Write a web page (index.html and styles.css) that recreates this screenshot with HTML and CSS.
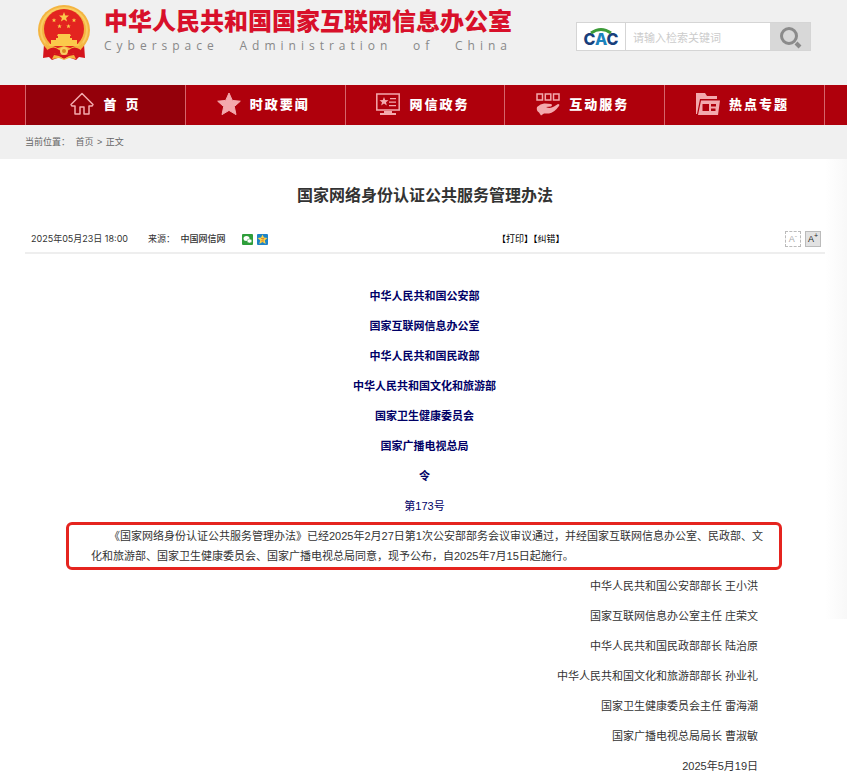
FILE: index.html
```
<!DOCTYPE html>
<html lang="zh-CN">
<head>
	<meta charset="utf-8">
	<meta name="viewport" content="width=device-width, initial-scale=1">
	<title>国家网络身份认证公共服务管理办法</title>
	<link rel="stylesheet" href="styles.css">
</head>
<body>
	<div class="header">
		<div class="logo">
			<svg class="emblem" viewBox="0 0 54 56">
				<path d="M7 39 L6 53 L12 52 L15 55 L23 52 L27 54 L31 52 L39 55 L42 52 L48 53 L47 39z" fill="#d4141c"/>
				<ellipse cx="27" cy="25" rx="26" ry="25" fill="#f4b541"/>
				<ellipse cx="27" cy="25" rx="23" ry="22" fill="none" stroke="#f9cc62" stroke-width="2"/>
				<circle cx="27" cy="24" r="20" fill="#e32420"/>
				<path d="M27 7l1.3 3.4 3.7.2-2.9 2.3 1 3.6-3.1-2-3.1 2 1-3.6-2.9-2.3 3.7-.2z" fill="#fbc94b"/>
				<path d="M17 13l.6 1.5 1.6.1-1.2 1 .4 1.6-1.4-.9-1.4.9.4-1.6-1.2-1 1.6-.1zM37 13l.6 1.5 1.6.1-1.2 1 .4 1.6-1.4-.9-1.4.9.4-1.6-1.2-1 1.6-.1zM22.500 19l.6 1.500 1.600.1-1.200 1 .4 1.600-1.400-.9-1.400.9.4-1.600-1.200-1 1.600-.1zM31.500 19l.6 1.500 1.600.1-1.200 1 .4 1.600-1.400-.9-1.400.9.4-1.600-1.200-1 1.600-.1z" fill="#fbc94b"/>
				<path d="M21 29h12l1 2h-1v2h2v2h5v4h2v2H12v-2h2v-4h5v-2h2v-2h-1z" fill="#fbc94b"/>
				<path d="M8 37q5 6 13 6l6-2 6 2q8 0 13-6l-2 8-9 4-8-2-8 2-9-4z" fill="#f4b541"/>
				<path d="M10 45q7-5 12 0l5 2 5-2q5-5 12 0l-2 5q-5-3-9 0l-6-1-6 1q-4-3-9 0z" fill="#d4141c"/>
				<circle cx="27" cy="46" r="4" fill="#f9cc62"/>
				<circle cx="27" cy="46" r="2" fill="#d98a20"/>
				<path d="M15 54l2-4 5 1 5 3 5-3 5-1 2 4-7-1-5 2-5-2z" fill="#f4b541"/>
			</svg>
			<div class="logo-text">
				<h1>中华人民共和国国家互联网信息办公室</h1>
				<p class="english"><span>Cyberspace</span> <span>Administration</span> <span>of</span> <span>China</span></p>
			</div>
		</div>
		<form class="search">
			<span class="cac">
				<svg width="42" height="27" viewBox="0 0 42 27">
					<text x="21" y="22" text-anchor="middle" class="cac-text">C<tspan fill="#1c83bd">A</tspan>C</text>
					<path d="M11 10Q21 3 31 10" fill="none" stroke="#3c9b38" stroke-width="3"/>
				</svg>
			</span>
			<input type="text" placeholder="请输入检索关键词" aria-label="请输入检索关键词">
			<button type="button" aria-label="搜索">
				<svg width="24" height="24" viewBox="0 0 24 24" fill="none" stroke="#8b8b8b">
					<circle cx="11" cy="11" r="7.500" stroke-width="3"/>
					<path d="M18 18l4 4" stroke-width="4"/>
				</svg>
			</button>
		</form>
	</div>
	<div class="nav">
		<ul>
			<li class="on"><a href="#">
				<svg viewBox="0 0 24 24" fill="none" stroke="#f3a9ad" stroke-width="1.500" stroke-linejoin="round">
					<path d="M12 1.500L1 12.500l1 1.500h3v8h5v-7h4v7h5v-8h3l1-1.500z"/>
				</svg>
				<span>首 页</span></a></li>
			<li><a href="#">
				<svg viewBox="0 0 24 24" fill="#f3a9ad" stroke="#f3a9ad" stroke-linejoin="round">
					<path d="M12 1l3.300 7.400 8 .8-6 5.400 1.700 8-7-4.200-7 4.200 1.700-8-6-5.400 8-.8z"/>
				</svg>
				<span>时政要闻</span></a></li>
			<li><a href="#">
				<svg viewBox="0 0 24 24" fill="#f3a9ad">
					<path d="M.8 2h22.400v16H.8z" fill="none" stroke="#f3a9ad" stroke-width="1.500"/>
					<path d="M8 5l1.200 3 3.300.2-2.500 2 .8 3.200L8 11.600l-2.800 1.800.8-3.200-2.500-2L6.800 8zM14 6h6v1.300h-6zM13 9.500h7v1.300h-7zM13 13h7v1.300h-7zM8 19h8v2h4v2H4v-2h4z"/>
				</svg>
				<span>网信政务</span></a></li>
			<li><a href="#">
				<svg viewBox="0 0 24 24" fill="#f3a9ad">
					<path d="M1 2h5.500v6H1zM9.300 2h5.500v6H9.300zM17.500 2H23v6h-5.500z" fill="none" stroke="#f3a9ad" stroke-width="1.500"/>
					<path d="M1 15q4-4 8-3.500l6 .5q2 1 0 2.500l-5 .5q4 2 8-.5l4-2.500q2 0 1 2-5 7-10 7.500H8l-3 2-2-3q-3-2-2-5.500z"/>
				</svg>
				<span>互动服务</span></a></li>
			<li><a href="#">
				<svg viewBox="0 0 24 24" fill="#f3a9ad">
					<path d="M0 22V1h9l2 3h10v3H4L1 22z"/>
					<path fill-rule="evenodd" d="M5 8.500h19l-2 14.500H2zM6.500 12v7H13v-7zM15 12v2.500h5V12zM15 16.500V19h4.500v-2.500z"/>
				</svg>
				<span>热点专题</span></a></li>
		</ul>
	</div>
	<div class="crumbs">当前位置： <a href="#">首页</a> &gt; <a href="#">正文</a></div>

	<div class="main">
		<h2>国家网络身份认证公共服务管理办法</h2>
		<div class="info">
			<div class="source">
				<span>2025年05月23日 18:00</span>
				<span>来源： <b>中国网信网</b></span>
				<span class="share">
					<a href="#" aria-label="微信"><svg width="11" height="11" viewBox="0 0 11 11">
						<rect width="11" height="11" rx="1" fill="#2e9e3a"/>
						<ellipse cx="4.500" cy="4.500" rx="3" ry="2.500" fill="#fff"/>
						<ellipse cx="7.500" cy="7" rx="2.500" ry="2" fill="#fff" stroke="#2e9e3a" stroke-width=".5"/>
					</svg></a>
					<a href="#" aria-label="QQ空间"><svg width="11" height="11" viewBox="0 0 11 11">
						<rect width="11" height="11" rx="1" fill="#1e83c9"/>
						<path d="M5.500 .5l1.400 3.100 3.600.3-2.700 2.400.9 3.700-3.200-2-3.200 2 .9-3.700L.5 3.900l3.600-.3z" fill="#fbd54a"/>
						<path d="M4 4.500h3L4.500 7H7" fill="none" stroke="#d9782a" stroke-width=".8"/>
					</svg></a>
				</span>
			</div>
			<div class="tools"><a href="#">【打印】</a><a href="#">【纠错】</a></div>
			<div class="size">
				<button type="button" class="smaller">A<sup>-</sup></button>
				<button type="button" class="bigger">A<sup>+</sup></button>
			</div>
		</div>
		<div class="content">
			<p class="dept">中华人民共和国公安部</p>
			<p class="dept">国家互联网信息办公室</p>
			<p class="dept">中华人民共和国民政部</p>
			<p class="dept">中华人民共和国文化和旅游部</p>
			<p class="dept">国家卫生健康委员会</p>
			<p class="dept">国家广播电视总局</p>
			<p class="dept">令</p>
			<p class="dept number">第173号</p>
			<p class="mark">《国家网络身份认证公共服务管理办法》已经2025年2月27日第1次公安部部务会议审议通过，并经国家互联网信息办公室、民政部、文化和旅游部、国家卫生健康委员会、国家广播电视总局同意，现予公布，自2025年7月15日起施行。</p>
			<p class="sign">中华人民共和国公安部部长 王小洪</p>
			<p class="sign">国家互联网信息办公室主任 庄荣文</p>
			<p class="sign">中华人民共和国民政部部长 陆治原</p>
			<p class="sign">中华人民共和国文化和旅游部部长 孙业礼</p>
			<p class="sign">国家卫生健康委员会主任 雷海潮</p>
			<p class="sign">国家广播电视总局局长 曹淑敏</p>
			<p class="sign">2025年5月19日</p>
		</div>
	</div>
</body>
</html>
```
FILE: styles.css
```
*{ margin: 0; padding: 0; box-sizing: border-box;}
body{
	font-family: "Liberation Sans", "Noto Sans CJK SC", sans-serif;
	font-size: 11px;
	line-height: 20px;
	color: #333;
	background: #fff;
}
a{ color: inherit; text-decoration: none;}
ul{ list-style: none;}
button{ cursor: pointer;}

/* 头部 */
.header{
	display: flex;
	justify-content: space-between;
	align-items: flex-start;
	height: 85px;
	padding: 2px 36px 0 37px;
	background: #f0f0f0;
}
.logo{ display: flex; gap: 13px;}
.emblem{ width: 54px; height: 56px; margin-top: 3px;}
.logo h1{
	font-family: "Noto Sans CJK SC", sans-serif;
	font-size: 24px;
	font-weight: 900;
	line-height: 35px;
	color: #d8102a;
	white-space: nowrap;
}
.english{
	display: flex;
	justify-content: space-between;
	font-family: "Open Sans", sans-serif;
	font-size: 12px;
	line-height: 17px;
	letter-spacing: 5px;
	color: #888;
}
.search{
	display: flex;
	width: 235px;
	height: 29px;
	margin-top: 20px;
	border: 1px solid #d5d5d5;
	background: #fff;
}
.cac{
	display: flex;
	align-items: center;
	justify-content: center;
	width: 49px;
	border-right: 1px solid #d5d5d5;
}
.cac-text{ font: 800 16px Inter, sans-serif; fill: #17407c;}
.search input{
	flex: 1;
	min-width: 0;
	padding: 0 7px;
	border: 0;
	outline: 0;
	font-family: "Noto Sans CJK SC", sans-serif;
	font-size: 11px;
}
.search input::placeholder{ color: #ccc;}
.search button{
	display: flex;
	align-items: center;
	justify-content: center;
	width: 40px;
	border: 0;
	background: #d8d8d8;
}

/* 导航 */
.nav{ padding: 0 22px 0 25px; background: #af000c;}
.nav ul{ display: flex; border-left: 1px solid #d5646b;}
.nav li{ flex: 1; border-right: 1px solid #d5646b;}
.nav .on{ background: #94000a;}
.nav a{
	display: flex;
	align-items: center;
	justify-content: center;
	gap: 9px;
	height: 40px;
	padding: 0 4px 2px 0;
	font-family: "Noto Sans CJK SC", sans-serif;
	font-size: 13px;
	font-weight: 900;
	letter-spacing: 2px;
	color: #fff;
}
.nav svg{ width: 24px; height: 24px;}
.nav .on a{ padding-right: 0; word-spacing: 2px;}

.crumbs{
	height: 34px;
	padding: 0 25px;
	font-size: 9px;
	line-height: 34px;
	color: #666;
	background: #f0f0f0;
	word-spacing: 1px;
}
.crumbs a:first-child{ margin-left: 2px;}

/* 正文 */
.main{
	padding: 23px 22px 6px 25px;
	background: linear-gradient(to left, #f8f8f8, #fff 22px) right top / 22px 460px no-repeat;
}
.main h2{
	font-size: 16px;
	font-weight: bold;
	line-height: 28px;
	text-align: center;
}
.info{
	display: grid;
	grid-template-columns: 59% 1fr auto;
	align-items: center;
	height: 28px;
	margin-top: 16px;
	padding: 0 4px 0 6px;
	border-bottom: 2px solid #eee;
	font-family: Inter, "Noto Sans CJK SC", sans-serif;
	font-size: 9px;
}
.source{ display: flex; align-items: center; gap: 20px;}
.source b{ margin-left: 3px; font-weight: 500;}
.share{ display: flex; gap: 4px; margin-left: -4px;}
.share svg{ display: block;}
.tools{ color: #000;}
.size{ display: flex; justify-content: flex-end; gap: 4px;}
.size button{
	width: 16px;
	height: 16px;
	border: 1px solid #bbb;
	font: 9px/13px "Liberation Sans", sans-serif;
}
.size sup{ font-size: 7px; line-height: 0;}
.size .smaller{ border-style: dashed; background: #fff; color: #aaa;}
.size .bigger{ background: #e2e2e2; color: #222;}

.content{
	display: flex;
	flex-direction: column;
	gap: 10px;
	margin: 32px 43px 0 41px;
}
.content p{ padding: 0 24px 0 25px;}
.content .dept{ text-align: center; font-weight: bold; color: #000066;}
.content .number{ font-weight: normal;}
.content .mark{
	margin: -4px 0;
	padding: 1px 15px 1px 22px;
	border: 3px solid #e5241f;
	border-radius: 6px;
	text-indent: 18px;
}
.sign{ text-align: right;}
```
